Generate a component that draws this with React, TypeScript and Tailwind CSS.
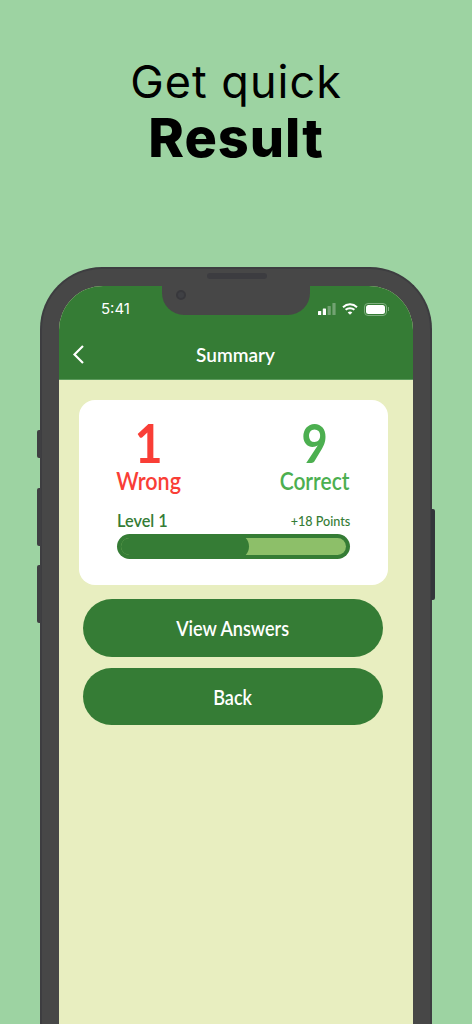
export default function App() {
  return (
    <div className="h-[1024px] w-[472px] overflow-hidden bg-[#9dd3a2] font-['Inter',sans-serif]">
      <div className="flex flex-col items-center pt-[55px] text-black">
        <div className="text-[45px] leading-[54px] font-normal tracking-[1px]">Get quick</div>
        <div className="text-[54px] leading-[57px] font-extrabold tracking-[1px]">Result</div>
      </div>
      <div className="relative mx-auto mt-[101px] h-[900px] w-[392px] rounded-t-[62px] border-[2px] border-b-0 border-[#3d3d40] bg-[#474747] px-[17px] pt-[17px]">
        <div className="absolute -left-[5px] top-[161px] h-[28px] w-[4px] rounded-l-[2px] bg-[#3f3f42]" />
        <div className="absolute -left-[5px] top-[219px] h-[58px] w-[4px] rounded-l-[2px] bg-[#3f3f42]" />
        <div className="absolute -left-[5px] top-[296px] h-[58px] w-[4px] rounded-l-[2px] bg-[#3f3f42]" />
        <div className="absolute -right-[5px] top-[240px] h-[91px] w-[4px] rounded-r-[2px] bg-[#33363b]" />
        <div className="absolute left-[165px] top-[4px] h-[6px] w-[60px] rounded-full bg-[#3c3c40]" />
        <div className="relative h-[900px] w-[354px] overflow-hidden rounded-t-[44px] bg-[#e8eec0] font-['Lato',sans-serif]">
          <div className="absolute left-[103px] top-0 h-[29px] w-[148px] rounded-b-[22px] bg-[#474747]">
            <div className="absolute left-[14px] top-[4px] h-[10px] w-[10px] rounded-full border-[2px] border-[#38383c] bg-[#3f4044]" />
          </div>
          <div className="h-[94px] border-b border-[#5c9a5c] bg-[#357c35] text-white">
            <div className="flex items-center justify-between pl-[42px] pr-[24px] pt-[14px]">
              <span className="font-['Inter',sans-serif] text-[15px] leading-[18px] font-normal">5:41</span>
              <div className="flex items-center gap-[6px]">
                <svg width="18" height="12" viewBox="0 0 18 12">
                  <rect x="0" y="8" width="3.2" height="4" rx="0.6" fill="#fff" />
                  <rect x="4.8" y="5.5" width="3.2" height="6.5" rx="0.6" fill="#fff" />
                  <rect x="9.6" y="3" width="3.2" height="9" rx="0.6" fill="#fff" opacity="0.3" />
                  <rect x="14.4" y="0" width="3.2" height="12" rx="0.6" fill="#fff" opacity="0.3" />
                </svg>
                <svg width="16" height="12" viewBox="0 0 16 12" fill="none" stroke="#fff" strokeWidth="2">
                  <path d="M1 4.2C5 0.4 11 0.4 15 4.2" />
                  <path d="M3.6 6.8C6 4.6 10 4.6 12.4 6.8" />
                  <path d="M8 11.8 5.7 9.4C7.1 8.2 8.9 8.2 10.3 9.4Z" fill="#fff" stroke="none" />
                </svg>
                <div className="flex items-center">
                  <div className="h-[13px] w-[23px] rounded-[4px] border border-[#7fae7f] p-[1px]">
                    <div className="h-full w-full rounded-[2.5px] bg-white" />
                  </div>
                  <div className="ml-[1px] h-[4px] w-[1px] bg-[#7fae7f]" />
                </div>
              </div>
            </div>
            <div className="relative mt-[22px] flex h-[28px] items-center justify-center">
              <svg className="absolute left-[13px] top-[4px]" width="13" height="21" viewBox="0 0 13 21" fill="none" stroke="#fff" strokeWidth="2.2">
                <path d="M11 2 2.5 10.5 11 19" />
              </svg>
              <span className="ml-[-1px] scale-x-[0.95] text-[20px] leading-[28px] font-semibold">Summary</span>
            </div>
          </div>
          <div className="flex flex-col items-center px-[20px] pt-[20px]">
            <div className="w-[309px] self-start rounded-[16px] bg-white px-[38px] pt-[16px] pb-[26px]">
              <div className="flex items-start justify-between">
                <div className="flex w-[64px] flex-col items-center whitespace-nowrap text-[#f93e36]">
                  <span className="translate-y-[2px] scale-x-[0.9] text-[54px] leading-[50px] font-bold">1</span>
                  <span className="scale-x-[0.86] text-[25px] leading-[28px] font-semibold">Wrong</span>
                </div>
                <div className="flex w-[70px] flex-col items-center whitespace-nowrap text-[#4caf50]">
                  <span className="translate-y-[2px] scale-x-[0.84] text-[54px] leading-[50px] font-bold">9</span>
                  <span className="scale-x-[0.84] text-[25px] leading-[28px] font-semibold">Correct</span>
                </div>
              </div>
              <div className="mt-[16px] flex items-end justify-between whitespace-nowrap text-[#357c35]">
                <span className="origin-left scale-x-[0.96] text-[17px] leading-[22px] font-semibold">Level 1</span>
                <span className="origin-right scale-x-[0.9] text-[14px] leading-[22px] font-medium">+18 Points</span>
              </div>
              <div className="mt-[2px] h-[25px] w-full rounded-full bg-[#357c35] p-[4px]">
                <div className="relative h-full w-full overflow-hidden rounded-full bg-[#8dbf69]">
                  <div className="absolute -left-[4px] -top-[4px] h-[25px] w-[132px] rounded-full bg-[#357c35]" />
                </div>
              </div>
            </div>
            <button className="mt-[14px] ml-[4px] h-[58px] w-[300px] self-start rounded-full bg-[#357c35] text-white">
              <span className="inline-block scale-x-[0.86] text-[21px] font-semibold">View Answers</span>
            </button>
            <button className="mt-[11px] ml-[4px] h-[57px] w-[300px] self-start rounded-full bg-[#357c35] text-white">
              <span className="inline-block scale-x-[0.86] text-[21px] font-semibold">Back</span>
            </button>
          </div>
        </div>
      </div>
    </div>
  );
}
